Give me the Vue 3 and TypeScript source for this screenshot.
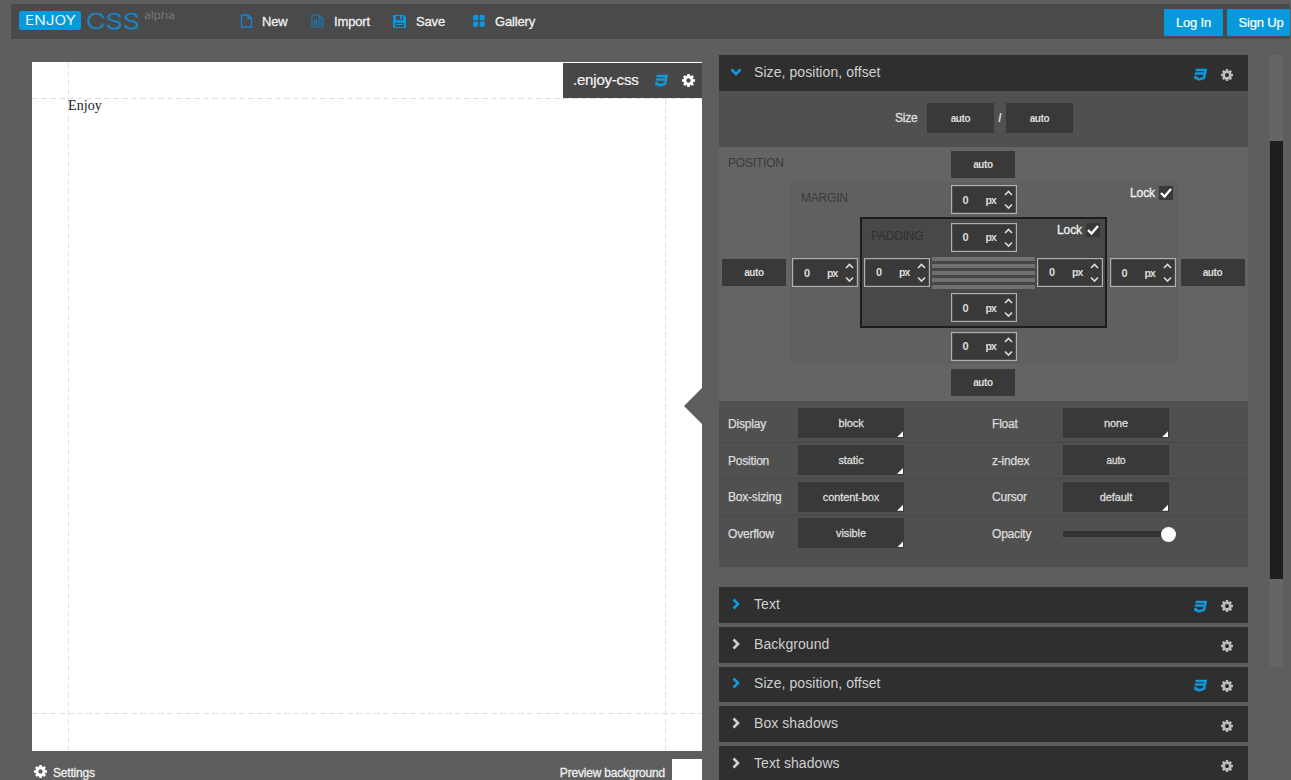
<script setup lang="ts">
import { defineComponent, h } from 'vue'

const gearPath =
  'M1152 896q0-106-75-181t-181-75-181 75-75 181 75 181 181 75 181-75 75-181zm512-109v222q0 12-8 23t-20 13l-185 28q-19 54-39 91 35 50 107 138 10 12 10 25t-9 23q-27 37-99 108t-94 71q-12 0-26-9l-138-108q-44 23-91 38-16 136-29 186-7 28-36 28h-222q-14 0-24.5-8.5t-11.5-21.5l-28-184q-49-16-90-37l-141 107q-10 9-25 9-14 0-25-11-126-114-165-168-7-10-7-23 0-12 8-23 15-21 51-66.5t54-70.5q-27-50-41-99l-183-27q-13-2-21-12.5t-8-23.5v-222q0-12 8-23t19-13l186-28q14-46 39-92-40-57-107-138-10-12-10-24 0-10 9-23 26-36 98.5-107.5t94.5-71.5q13 0 26 10l138 107q44-23 91-38 16-136 29-186 7-28 36-28h222q14 0 24.5 8.5t11.5 21.5l28 184q49 16 90 37l142-107q9-9 24-9 13 0 25 10 129 119 165 170 7 8 7 22 0 12-8 23-15 21-51 66.5t-54 70.5q26 50 41 98l183 28q13 2 21 12.5t8 23.5z'
const css3Path =
  'M275 128h1505l-266 1333-804 267-698-267 71-356h297l-29 147 422 161 486-161 68-339h-1208l58-297h1209l38-191h-1208z'

const icon = (path: string, viewBox: string) =>
  defineComponent({
    render: () => h('svg', { viewBox, fill: 'currentColor', 'aria-hidden': 'true' }, [h('path', { d: path })]),
  })
const GearIcon = icon(gearPath, '128 128 1536 1536')
const Css3Icon = icon(css3Path, '0 0 1792 1792')

const Spinner = defineComponent({
  render: () =>
    h('div', { class: 'spinner' }, [
      h('b', { class: 'num' }, '0'),
      h('b', { class: 'unit' }, 'px'),
      h('svg', { class: 'steps', viewBox: '0 0 9 21', fill: 'none', stroke: 'currentColor', 'stroke-width': '1.6' }, [
        h('path', { d: 'M1 6 4.5 2.5 8 6M1 15.5 4.5 19 8 15.5' }),
      ]),
    ]),
})

interface Row {
  left: string
  value: string
  right: string
  rightValue?: string
  menu?: boolean
}
const rows: Row[] = [
  { left: 'Display', value: 'block', right: 'Float', rightValue: 'none', menu: true },
  { left: 'Position', value: 'static', right: 'z-index', rightValue: 'auto' },
  { left: 'Box-sizing', value: 'content-box', right: 'Cursor', rightValue: 'default', menu: true },
  { left: 'Overflow', value: 'visible', right: 'Opacity' },
]
const sections = [
  { title: 'Text', active: true },
  { title: 'Background', active: false },
  { title: 'Size, position, offset', active: true },
  { title: 'Box shadows', active: false },
  { title: 'Text shadows', active: false },
]
</script>

<template>
  <div class="page">
    <header class="topbar">
      <svg class="logo" width="160" height="35" viewBox="0 -6 160 35">
        <rect x="0" y="1" width="62" height="19" rx="2.5" fill="#0799dc" />
        <text x="6" y="15" class="enjoy" textLength="51" lengthAdjust="spacingAndGlyphs">ENJOY</text>
        <text x="67" y="18.5" class="css" textLength="54" lengthAdjust="spacingAndGlyphs">CSS</text>
        <text x="125" y="8.5" class="alpha" textLength="31" lengthAdjust="spacingAndGlyphs">alpha</text>
      </svg>
      <nav class="menu">
        <a class="new">
          <svg width="13" height="14" viewBox="0 0 13 14" fill="none" stroke="#1687d2" stroke-width="1.3"><path d="M1.5 1H8L11.5 4.5V13H1.5ZM8 1V4.5H11.5" /></svg>New
        </a>
        <a class="import">
          <svg width="13" height="14" viewBox="0 0 13 14" fill="none" stroke="#1879b5" stroke-width="1.2"><path d="M1 1H8L12 5V13H1ZM8 1V5H12M3.5 11V6H5.5V11ZM8 6V11M10 7V11" /></svg>Import
        </a>
        <a class="save">
          <svg width="13" height="13" viewBox="0 0 13 13"><path fill="#0d95db" fill-rule="evenodd" d="M0 0H11L13 2V13H0ZM3 1V5H10V1ZM2 8V12H11V8Z" /><path fill="#0d95db" d="M7 1H9V4H7ZM3 9H10V10H3Z" /></svg>Save
        </a>
        <a class="gallery">
          <svg width="12" height="12" viewBox="0 0 12 12" fill="#0999df"><rect width="5.2" height="5.2" rx="1" /><rect x="6.6" width="5.2" height="5.2" rx="1" /><rect y="6.6" width="5.2" height="5.2" rx="1" /><rect x="6.6" y="6.6" width="5.2" height="5.2" rx="1" /></svg>Gallery
        </a>
      </nav>
      <div class="account">
        <button class="login">Log In</button>
        <button class="signup">Sign Up</button>
      </div>
    </header>

    <main class="workspace">
      <section class="preview">
        <div class="canvas">
          <i class="guide h top"></i>
          <i class="guide h bottom"></i>
          <i class="guide v left"></i>
          <i class="guide v right"></i>
          <span class="sample">Enjoy</span>
          <div class="tag"><span>.enjoy-css</span><Css3Icon class="css3" /><GearIcon class="gear" /></div>
          <i class="notch"></i>
        </div>
        <footer class="under">
          <GearIcon class="gear" /><span class="settings">Settings</span>
          <span class="bgname">Preview background</span><i class="swatch"></i>
        </footer>
      </section>

      <section class="panel">
        <div class="bar open">
          <svg class="chev" viewBox="0 0 12 12"><path d="M1.5 3.5 6 8 10.5 3.5" /></svg>
          <span class="title">Size, position, offset</span>
          <Css3Icon class="css3" /><GearIcon class="gear" />
        </div>
        <div class="size">
          <span class="lbl">Size</span><b class="field">auto</b><span class="slash">/</span><b class="field">auto</b>
        </div>
        <div class="box position">
          <span class="name">POSITION</span>
          <b class="auto t">auto</b>
          <b class="auto l">auto</b>
          <div class="box margin">
            <span class="name">MARGIN</span>
            <span class="lock">Lock<i><svg viewBox="0 0 14 14"><path d="M2 7 5.5 10.5 12 3" /></svg></i></span>
            <Spinner class="t" /><Spinner class="l" />
            <div class="box padding">
              <span class="name">PADDING</span>
              <span class="lock">Lock<i><svg viewBox="0 0 14 14"><path d="M2 7 5.5 10.5 12 3" /></svg></i></span>
              <Spinner class="t" /><Spinner class="l" />
              <div class="content"></div>
              <Spinner class="r" /><Spinner class="b" />
            </div>
            <Spinner class="r" /><Spinner class="b" />
          </div>
          <b class="auto r">auto</b>
          <b class="auto b">auto</b>
        </div>
        <div class="props">
          <div v-for="row in rows" :key="row.left" class="row">
            <span class="key">{{ row.left }}</span>
            <b class="select menu-mark">{{ row.value }}</b>
            <span class="key second">{{ row.right }}</span>
            <b v-if="row.rightValue" class="select" :class="{ 'menu-mark': row.menu, small: !row.menu }">{{ row.rightValue }}</b>
            <div v-else class="slider"><i></i></div>
          </div>
        </div>
        <div class="sections">
          <div v-for="(s, n) in sections" :key="n" class="bar" :class="{ active: s.active }">
            <svg class="chev" viewBox="0 0 12 12"><path d="M3.5 1.5 8 6 3.5 10.5" /></svg>
            <span class="title">{{ s.title }}</span>
            <Css3Icon v-if="s.active" class="css3" /><GearIcon class="gear" />
          </div>
        </div>
      </section>
      <div class="scroll"><i></i></div>
    </main>
  </div>
</template>

<style>
html, body { margin: 0; background: #5e5e5e; overflow: hidden; }
.spinner {
  box-sizing: border-box; width: 66px; height: 29px; border: 1.5px solid #b0b0b0;
  background: #393939; color: #ddd; display: flex; align-items: center;
  font-size: 11px; padding-left: 11px; box-shadow: inset 0 0 0 0.5px #666;
}
.spinner .num { width: 23px; }
.spinner .unit { width: 18px; letter-spacing: -0.8px; font-size: 10.5px; }
.spinner .steps { width: 9px; height: 21px; flex: none; }
</style>

<style scoped>
.page {
  width: 1291px; height: 780px; overflow: hidden; background: #5e5e5e;
  font-family: "Liberation Sans", Arial, sans-serif; color: #ddd;
  display: flex; flex-direction: column;
}
.topbar {
  margin: 4px 1px 0 11px; height: 35px; background: #4a4a4a; flex: none;
  display: flex; align-items: center; padding-left: 8px;
}
.logo { display: block; flex: none; }
.enjoy { font: 12.5px Inter, sans-serif; fill: #e6f6ff; }
.css { font: 300 21.5px Inter, sans-serif; fill: #1489c5; stroke: #1489c5; stroke-width: 0.3px; }
.alpha { font: 300 10px Inter, sans-serif; fill: #858585; }
.menu { display: flex; margin-left: 61px; font-size: 13px; letter-spacing: -0.15px; color: #f0f0f0; -webkit-text-stroke: 0.3px; }
.menu a { display: flex; align-items: center; margin-top: -1px; }
.menu svg { flex: none; -webkit-text-stroke: 0; }
.new { width: 71px; gap: 9px; }
.import { width: 82px; gap: 10px; }
.save { width: 80px; gap: 10px; }
.gallery { gap: 10px; }
.account { margin-left: auto; display: flex; gap: 4px; }
.account button {
  border: 0; border-radius: 1px; height: 27px; background: #0799dc; color: #fff; padding: 0;
  font: 13px "Liberation Sans", Arial, sans-serif; letter-spacing: -0.15px; -webkit-text-stroke: 0.2px; margin-top: 1px;
}
.login { width: 59px; }
.signup { width: 63px; padding-left: 5px !important; }

.workspace { display: flex; flex: 1; min-height: 0; }
.preview { margin: 23px 0 0 32px; width: 670px; flex: none; }
.canvas { position: relative; height: 689px; background: #fff; }
.guide { position: absolute; }
.guide.h { left: 0; right: 0; height: 1px; background: repeating-linear-gradient(90deg, #d9e2e5 0 6px, #fff 6px 9px); }
.guide.v { top: 0; bottom: 0; width: 1px; background: repeating-linear-gradient(#dce5e8 0 6px, #fff 6px 9px); }
.guide.top { top: 36px; }
.guide.bottom { top: 651px; }
.guide.left { left: 36px; }
.guide.right { left: 633px; }
.sample { position: absolute; left: 36px; top: 36px; font: 14px/16px "Liberation Serif", serif; color: #222; letter-spacing: 0.1px; }
.tag {
  position: absolute; right: 0; top: 1px; width: 139px; height: 35px; background: #474747;
  display: flex; align-items: center; box-sizing: border-box; padding-left: 10px;
}
.tag span { font-size: 15px; letter-spacing: -0.2px; color: #f4f4f4; width: 82px; margin-top: -2px; -webkit-text-stroke: 0.2px; }
.css3 { width: 13px; height: 13px; color: #129ade; flex: none; stroke: currentColor; stroke-width: 60px; }
.gear { width: 12px; height: 12px; color: #bcbcbc; flex: none; }
.tag .gear { color: #fff; margin-left: 14px; width: 13px; height: 13px; }
.notch {
  position: absolute; right: 0; top: 326px; width: 18px; height: 36px; background: #5e5e5e;
  clip-path: polygon(100% 0, 100% 100%, 0 50%);
}
.under { display: flex; align-items: flex-start; padding: 8px 0 0 2px; font-size: 12px; letter-spacing: -0.2px; color: #f0f0f0; -webkit-text-stroke: 0.3px; }
.under .gear { width: 13px; height: 13px; color: #fff; margin-top: 6px; }
.settings { margin: 7px 0 0 6px; }
.bgname { margin: 7px 7px 0 auto; }
.swatch { width: 30px; height: 30px; background: #fff; }

.panel { margin: 16px 0 0 17px; width: 529px; flex: none; }
.bar {
  height: 36px; background: #2f2f2f; display: flex; align-items: center;
  box-sizing: border-box; padding: 0 15px 0 11px;
}
.chev { width: 12px; height: 12px; fill: none; stroke: #d0d0d0; stroke-width: 2.6; flex: none; margin-top: -2px; }
.open .chev, .active .chev { stroke: #129ade; }
.title { font-size: 14px; letter-spacing: 0.07px; color: #d0d0d0; margin: -2px auto 0 12px; }
.bar .css3, .bar .gear { margin-top: 3px; }
.bar .gear { margin-left: 14px; }
.size {
  height: 56px; background: #505050; display: flex; align-items: center;
  box-sizing: border-box; padding: 0 0 2px 176px; font-size: 12px;
}
.lbl { width: 32px; letter-spacing: -0.2px; -webkit-text-stroke: 0.35px; }
.field, .auto, .select {
  background: #393939; display: flex; align-items: center; justify-content: center;
  font-size: 10px; letter-spacing: -0.35px; color: #ddd;
}
.field { width: 67px; height: 30px; }
.slash { width: 12px; text-align: center; font-weight: bold; }

.box { display: grid; position: relative; box-sizing: border-box; align-items: center; justify-items: center; }
.position { height: 254px; background: #646464; grid-template: 34px 183px 37px / 70px 388px 71px; }
.margin { width: 388px; height: 182px; background: #606060; grid-template: 35px 111px 36px / 70px 247px 71px; }
.padding { width: 247px; height: 111px; background: #484848; border: 2px solid #1c1c1c; grid-template: 36px 34px 37px / 70px 103px 70px; }
.margin, .padding { grid-area: 2 / 2; }
.position > .margin { align-self: end; margin-left: 2px; }
.t { grid-area: 1 / 2; }
.l { grid-area: 2 / 1; }
.r { grid-area: 2 / 3; }
.b { grid-area: 3 / 2; }
.auto { width: 64px; height: 27px; }
.content { grid-area: 2 / 2; width: 103px; height: 32px; margin-top: 2px; background: repeating-linear-gradient(#707070 0 4px, #464646 4px 7px); }
.name { position: absolute; left: 9px; top: 9px; font-size: 12px; line-height: 14px; letter-spacing: -0.2px; color: #3b3b3b; }
.margin > .name { left: 11px; top: 9px; }
.padding > .name { left: 9px; top: 10px; color: #303030; }
.lock { position: absolute; right: 5px; top: 4px; display: flex; align-items: center; gap: 4px; font-size: 12px; letter-spacing: -0.1px; color: #f2f2f2; -webkit-text-stroke: 0.3px; }
.lock i { width: 14px; height: 14px; background: #383838; }
.lock svg { display: block; width: 14px; height: 14px; fill: none; stroke: #fff; stroke-width: 2.3; }

.props { height: 166px; background: #505050; box-sizing: border-box; padding-top: 4px; }
.row { display: flex; height: 36.7px; align-items: center; box-sizing: border-box; padding-left: 9px; font-size: 12px; }
.row + .row { background: linear-gradient(#484848, #484848) 0 0 / 100% 1px no-repeat; }
.key { width: 70px; margin-top: 1px; letter-spacing: -0.2px; -webkit-text-stroke: 0.25px; }
.second { margin-left: 88px; width: 71px; }
.select { width: 106px; height: 30px; position: relative; font-weight: normal; font-size: 11px; -webkit-text-stroke: 0.3px; letter-spacing: -0.1px; }
.select.small { font-size: 10px; }
.menu-mark::after {
  content: ""; position: absolute; right: 1px; bottom: 1px; width: 6px; height: 6px;
  background: #fff; clip-path: polygon(100% 0, 100% 100%, 0 100%);
}
.slider { width: 106px; height: 6px; margin-top: 2px; background: #333; position: relative; }
.slider i { position: absolute; right: -7px; top: -4px; width: 15px; height: 15px; border-radius: 50%; background: #fff; }
.sections { margin-top: 20px; display: flex; flex-direction: column; gap: 4px; }
.sections .bar { height: 35.8px; }
.scroll { margin: 16px 0 0 22px; width: 13px; height: 612px; background: #656565; }
.scroll i { display: block; margin-top: 86px; height: 438px; background: #1e1e1e; }
</style>
